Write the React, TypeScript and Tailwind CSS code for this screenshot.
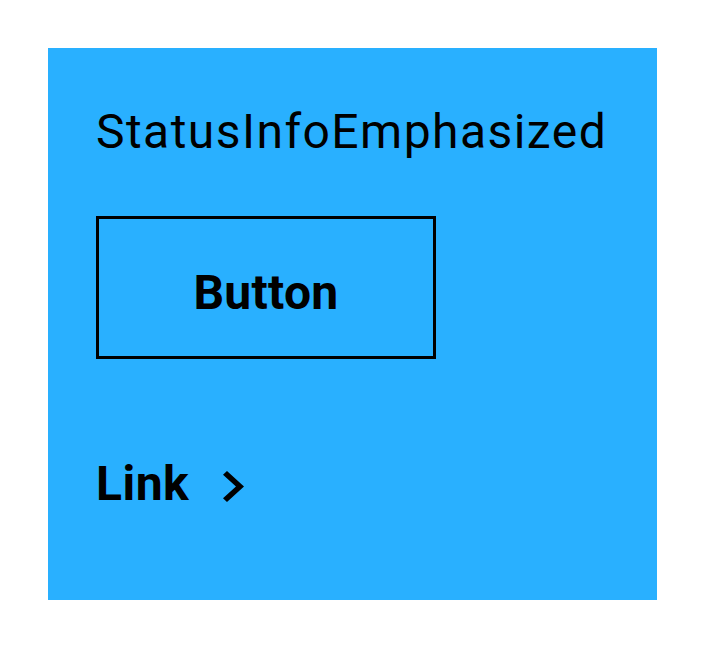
import React from "react";

export default function App() {
  return (
    <div className="w-[705px] h-[648px] bg-white p-[48px]" style={{ fontFamily: "Roboto, sans-serif" }}>
      <div className="w-[609px] h-[552px] bg-[#29b0ff] pl-[48px] pt-[48px] text-black">
        <div className="text-[48px] leading-[72px] font-normal tracking-[1.45px]">StatusInfoEmphasized</div>
        <div className="mt-[48px] w-[340px] h-[143px] border-[3px] border-black pt-[50px] text-center text-[48px] leading-[48px] font-bold tracking-[0.3px]">
          Button
        </div>
        <div className="mt-[101px] flex items-center h-[48px]">
          <span className="text-[48px] leading-[48px] font-bold tracking-[0.5px]">Link</span>
          <svg className="ml-[34px] mt-[5px]" width="21" height="31" viewBox="8.59 6 7.41 12" preserveAspectRatio="none">
            <path d="M10 6L8.59 7.41 13.17 12l-4.58 4.59L10 18l6-6z" fill="black" />
          </svg>
        </div>
      </div>
    </div>
  );
}
